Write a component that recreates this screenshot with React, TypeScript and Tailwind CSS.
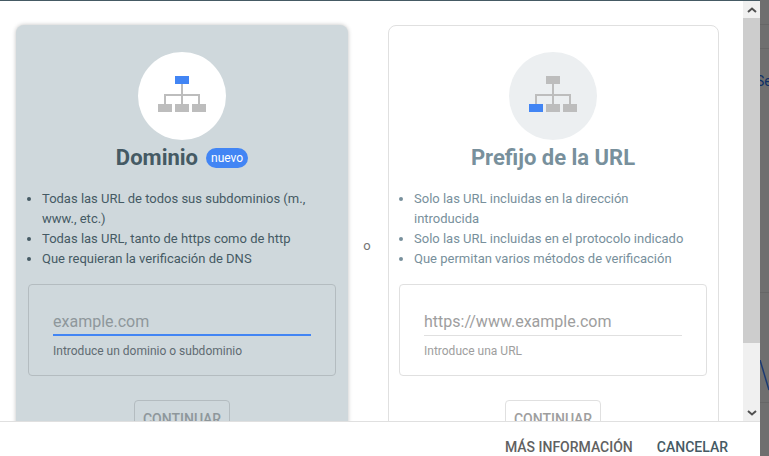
import React from 'react';

const BLUE = '#4285f4';
const GREY = '#bdbdbd';

// site tree pictogram, one box highlighted
const TreeIcon = ({ highlight }: { highlight: 'top' | 'left' }) => (
  <svg width="48" height="36" viewBox="0 0 48 36" fill="none" className="mb-1">
    <rect x="17" y="0" width="14" height="8" fill={highlight === 'top' ? BLUE : GREY} />
    <path d="M24 8V28M7 28V19H41V28" stroke={GREY} strokeWidth="2" />
    <rect x="0" y="28" width="14" height="8" fill={highlight === 'left' ? BLUE : GREY} />
    <rect x="17" y="28" width="14" height="8" fill={GREY} />
    <rect x="34" y="28" width="14" height="8" fill={GREY} />
  </svg>
);

const Bullets = ({ items, className }: { items: string[]; className: string }) => (
  <ul className={`list-disc text-[13px] leading-5 ${className}`}>
    {items.map((item) => (
      <li key={item}>{item}</li>
    ))}
  </ul>
);

const App: React.FC = () => {
  return (
    <div className="flex w-[769px] h-[456px] overflow-hidden bg-[#6f6f6f] font-['Roboto',sans-serif]">
      <div className="flex flex-col w-[760px] h-full bg-white border-t border-[#455a64]">
        <div className="flex flex-1 min-h-0">
          <div className="flex items-start w-[743px] h-[420px] overflow-hidden pt-6 pl-4 shrink-0">
            {/* Domain card, selected */}
            <div className="w-[332px] h-[440px] shrink-0 rounded-lg bg-[#cfd8dc] shadow-[0_0_4px_rgba(0,0,0,0.25)] text-[#455a64]">
              <div className="flex justify-center pt-[27px]">
                <div className="flex items-center justify-center w-[88px] h-[88px] rounded-full bg-white">
                  <TreeIcon highlight="top" />
                </div>
              </div>
              <div className="flex items-center justify-center gap-2 h-9">
                <h2 className="text-[22px] font-bold leading-7">Dominio</h2>
                <span className="flex items-center h-5 px-[5px] rounded-[10px] bg-[#4285f4] text-white text-xs">nuevo</span>
              </div>
              <div className="mt-[13px]">
                <Bullets
                  items={[
                    'Todas las URL de todos sus subdominios (m., www., etc.)',
                    'Todas las URL, tanto de https como de http',
                    'Que requieran la verificación de DNS',
                  ]}
                  className="pl-[26px] pr-2 marker:text-[#455a64]"
                />
              </div>
              <div className="mx-3 mt-[15px] h-[92px] rounded border border-[#b4bcc0] px-6 pt-6">
                <div className="h-[27px] border-b-2 border-[#4285f4] text-base leading-[26px] text-[#8e979b]">example.com</div>
                <p className="mt-[7px] text-xs leading-4 text-[#5f6b72]">Introduce un dominio o subdominio</p>
              </div>
              <div className="flex justify-center mt-6">
                <button className="w-24 h-9 rounded-sm border border-[#b4bcc0] pt-[2px] text-sm font-medium leading-5 text-[#8e979b]">CONTINUAR</button>
              </div>
            </div>

            <div className="flex justify-center w-10 shrink-0 pt-[211px] pr-[2px] text-[13px] leading-5 text-[#757575]">
              <span>o</span>
            </div>

            {/* URL prefix card */}
            <div className="w-[331px] h-[440px] shrink-0 rounded-lg border border-[#e0e0e0] bg-white text-[#78909c]">
              <div className="flex justify-center pt-[26px] pr-px">
                <div className="flex items-center justify-center w-[88px] h-[88px] rounded-full bg-[#eceff1]">
                  <TreeIcon highlight="left" />
                </div>
              </div>
              <div className="flex items-center justify-center h-9 pr-px">
                <h2 className="text-[22px] font-bold leading-7">Prefijo de la URL</h2>
              </div>
              <div className="mt-[13px]">
                <Bullets
                  items={[
                    'Solo las URL incluidas en la dirección introducida',
                    'Solo las URL incluidas en el protocolo indicado',
                    'Que permitan varios métodos de verificación',
                  ]}
                  className="pl-[25px] pr-7 marker:text-[#78909c]"
                />
              </div>
              <div className="ml-[10px] mr-[11px] mt-[15px] h-[92px] rounded border border-[#e0e0e0] px-6 pt-6">
                <div className="h-[27px] border-b border-[#e0e0e0] text-base leading-[26px] text-[#9e9e9e]">https://www.example.com</div>
                <p className="mt-[7px] text-xs leading-4 text-[#9e9e9e]">Introduce una URL</p>
              </div>
              <div className="flex justify-center mt-6 pr-px">
                <button className="w-24 h-9 rounded-sm border border-[#e0e0e0] pt-[2px] text-sm font-medium leading-5 text-[#9e9e9e]">CONTINUAR</button>
              </div>
            </div>
          </div>

          {/* Scrollbar */}
          <div className="flex flex-col w-[17px] shrink-0 bg-[#f0f0f0]">
            <div className="flex items-center justify-center h-[17px]">
              <svg width="10" height="6" viewBox="0 0 10 6" fill="none">
                <path d="M1 5L5 1.5L9 5" stroke="#505050" strokeWidth="2" />
              </svg>
            </div>
            <div className="h-[325px] bg-[#cdcdcd]" />
            <div className="flex-1" />
            <div className="flex items-center justify-center h-[17px]">
              <svg width="10" height="6" viewBox="0 0 10 6" fill="none">
                <path d="M1 1L5 4.5L9 1" stroke="#505050" strokeWidth="2" />
              </svg>
            </div>
          </div>
        </div>

        <div className="flex items-center justify-end gap-6 h-[35px] shrink-0 pt-4 pr-8 border-t border-[#e0e0e0] bg-white text-sm font-medium">
          <span className="text-[#616161]">MÁS INFORMACIÓN</span>
          <span className="text-[#455a64]">CANCELAR</span>
        </div>
      </div>

      {/* Page behind the dialog, dimmed */}
      <div className="flex flex-col w-[9px] h-full overflow-hidden bg-[#6f6f6f]">
        <div className="mt-6 h-px shrink-0 bg-[#666666]" />
        <div className="mt-[23px] h-px shrink-0 bg-[#666666]" />
        <div className="mt-[22px] -ml-1 shrink-0 whitespace-nowrap text-sm leading-5 text-[#0d2f66]">Se</div>
        <div className="mt-[201px] h-px shrink-0 bg-[#666666]" />
        <svg width="9" height="42" viewBox="0 0 9 42" fill="none" className="mt-[67px] shrink-0">
          <path d="M0 0L9 30" stroke="#1c3a72" strokeWidth="1.5" />
        </svg>
        <div className="h-px shrink-0 bg-[#666666]" />
      </div>
    </div>
  );
};

export default App;
